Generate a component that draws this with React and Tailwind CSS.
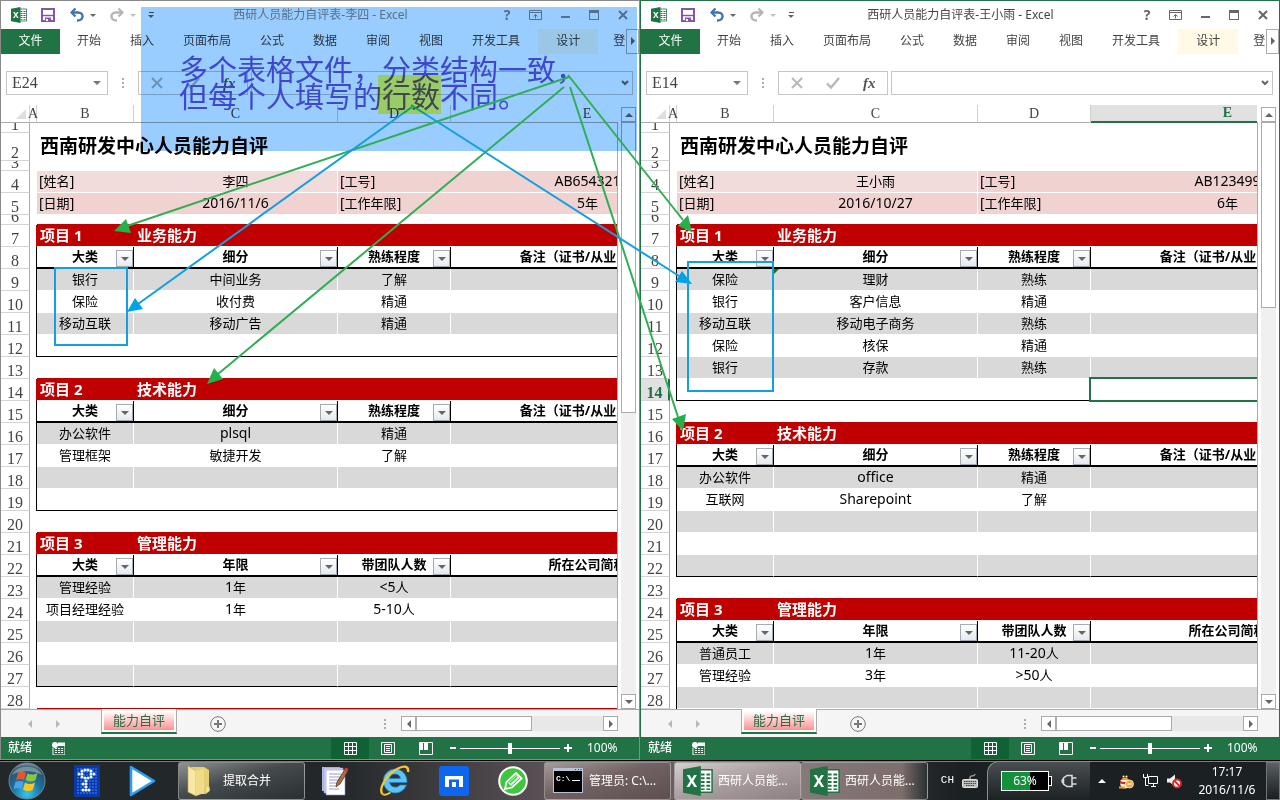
import React from "react";

const SANS = "font-['Noto_Sans','Noto_Sans_CJK_SC',sans-serif]";
const SERIF = "font-['Liberation_Serif','Noto_Sans_CJK_SC',serif]";

/* ---------- sheet data ---------- */

const bar = (no, name) => ({ type: "bar", no, name });
const head = (...cells) => ({ type: "head", cells });
const data = (...cells) => ({ type: "data", cells });
const blank = () => ({ type: "blank" });

const skillHead = () => head("大类", "细分", "熟练程度", "备注（证书/从业资格）");
const manageHead = () => head("大类", "年限", "带团队人数", "所在公司简称");

const intro = (name, id, date, years) => [
  { type: "blank", size: "small" },
  { type: "title", text: "西南研发中心人员能力自评" },
  { type: "blank", size: "small" },
  { type: "info", cells: ["[姓名]", name, "[工号]", id] },
  { type: "info", dark: true, cells: ["[日期]", date, "[工作年限]", years] },
  { type: "blank", size: "small" },
];

const leftRows = [
  ...intro("李四", "AB654321", "2016/11/6", "5年"),
  bar("项目 1", "业务能力"),
  skillHead(),
  data("银行", "中间业务", "了解"),
  data("保险", "收付费", "精通"),
  data("移动互联", "移动广告", "精通"),
  data(),
  blank(),
  bar("项目 2", "技术能力"),
  skillHead(),
  data("办公软件", "plsql", "精通"),
  data("管理框架", "敏捷开发", "了解"),
  data(),
  data(),
  blank(),
  bar("项目 3", "管理能力"),
  manageHead(),
  data("管理经验", "1年", "<5人"),
  data("项目经理经验", "1年", "5-10人"),
  data(),
  data(),
  data(),
  { type: "blank", beforeBar: true },
];

const rightRows = [
  ...intro("王小雨", "AB123499", "2016/10/27", "6年"),
  bar("项目 1", "业务能力"),
  skillHead(),
  { type: "data", flag: true, cells: ["保险", "理财", "熟练"] },
  data("银行", "客户信息", "精通"),
  data("移动互联", "移动电子商务", "熟练"),
  data("保险", "核保", "精通"),
  data("银行", "存款", "熟练"),
  { type: "data", selected: true, cells: [] },
  blank(),
  bar("项目 2", "技术能力"),
  skillHead(),
  data("办公软件", "office", "精通"),
  data("互联网", "Sharepoint", "了解"),
  data(),
  data(),
  data(),
  blank(),
  bar("项目 3", "管理能力"),
  manageHead(),
  data("普通员工", "1年", "11-20人"),
  data("管理经验", "3年", ">50人"),
  { type: "data", cells: [], open: true },
];

/* Latin runs are set one size larger than the Chinese text around them. */
function Mixed({ text }) {
  if (!text) return null;
  return text.split(/([\x21-\x7e]+)/).map((part, i) =>
    i % 2 ? (
      <span key={i} className="text-[14px]">
        {part}
      </span>
    ) : (
      part
    )
  );
}

/* ---------- small icons ---------- */

function ExcelIcon({ className }) {
  return (
    <svg viewBox="0 0 32 32" className={className} aria-hidden="true">
      <rect x="17" y="4" width="14" height="24" fill="#fff" stroke="#217346" strokeWidth="1.6" />
      <g fill="#217346">
        <path d="M19 8h4v2h-4zM25 8h4v2h-4zM19 12h4v2h-4zM25 12h4v2h-4zM19 16h4v2h-4zM25 16h4v2h-4zM19 20h4v2h-4zM25 20h4v2h-4zM19 24h4v1.600h-4zM25 24h4v1.600h-4z" />
      </g>
      <path d="M0 3.500 19 0v32L0 28.500z" fill="#217346" />
      <text x="9.500" y="22" textAnchor="middle" fontSize="17" fontWeight="700" fill="#fff" fontFamily="Noto Sans, sans-serif">
        X
      </text>
    </svg>
  );
}

function SaveIcon() {
  return (
    <svg viewBox="0 0 14 14" className="size-[14px]" fill="none" aria-hidden="true">
      <path d="M1 1h12v12H1z" stroke="#8458a8" strokeWidth="2" />
      <path d="M2 7.500h10" stroke="#8458a8" strokeWidth="1.500" />
      <path d="M4 9.500h6V13H4z" fill="#8458a8" />
      <path d="M5 11h2v2H5z" fill="#fff" />
    </svg>
  );
}

function UndoIcon() {
  return (
    <svg viewBox="0 0 14 14" className="size-[14px]" fill="none" aria-hidden="true">
      <path d="M1.500 4.500H8c6.500 0 6 8-1 8" stroke="#3f74b1" strokeWidth="2.400" />
      <path d="M5.500.5 1.500 4.500l4 4" stroke="#3f74b1" strokeWidth="2.200" />
    </svg>
  );
}

function RedoIcon() {
  return (
    <svg viewBox="0 0 14 14" className="size-[14px]" fill="none" aria-hidden="true">
      <path d="M12.500 4.500H6c-6.500 0-6 8 1 8" stroke="#b5b5b5" strokeWidth="2.400" />
      <path d="m8.500.5 4 4-4 4" stroke="#b5b5b5" strokeWidth="2.200" />
    </svg>
  );
}

function Caret({ className = "text-[#666666]" }) {
  return (
    <svg viewBox="0 0 6 3" className={`h-[3px] w-[6px] ${className}`} fill="currentColor" aria-hidden="true">
      <path d="M0 0h6L3 3z" />
    </svg>
  );
}

const ARROWS = {
  up: "M0 6h8L4 2z",
  down: "M0 2h8L4 6z",
  left: "M6 0v8L2 4z",
  right: "M2 0v8l4-4z",
};

function Arrow({ dir, className = "" }) {
  return (
    <svg viewBox="0 0 8 8" className={`size-2 ${className}`} fill="currentColor" aria-hidden="true">
      <path d={ARROWS[dir]} />
    </svg>
  );
}

/* ---------- Excel window parts ---------- */

function WindowButton({ label, children }) {
  return (
    <button aria-label={label} className="grid size-[14px] place-items-center">
      {children}
    </button>
  );
}

function TitleBar({ title, active }) {
  const tone = active ? "text-[#666666]" : "text-[#8c8c8c]";
  return (
    <header className="flex h-7 items-center">
      <div className="flex flex-1 basis-0 items-center pl-[10px]">
        <ExcelIcon className="size-4" />
        <button aria-label="保存" className="ml-[14px]"><SaveIcon /></button>
        <button aria-label="撤消" className="ml-[15px]"><UndoIcon /></button>
        <button aria-label="撤消选项" className="ml-[6px]"><Caret /></button>
        <button aria-label="恢复" className="ml-[14px]"><RedoIcon /></button>
        <button aria-label="恢复选项" className="ml-[6px]"><Caret className="text-[#c0c0c0]" /></button>
        <button aria-label="自定义快速访问工具栏" className="ml-[12px] flex flex-col items-center gap-[2px]">
          <span className="h-px w-[5px] bg-[#555555]" />
          <Caret />
        </button>
      </div>
      <h1 className={`shrink-0 text-[12px] ${active ? "text-[#444444]" : "text-[#8c8c8c]"}`}>{title}</h1>
      <div className={`flex flex-1 basis-0 items-center justify-end gap-[15px] pr-[9px] ${tone}`}>
        <WindowButton label="帮助">
          <span className="text-[14px] font-bold leading-[14px]">?</span>
        </WindowButton>
        <WindowButton label="功能区显示选项">
          <svg viewBox="0 0 14 12" className="h-3 w-[14px]" fill="none" stroke="currentColor" aria-hidden="true">
            <path d="M.5 1.500h12v9H.5zM.5 3.500h12M6.500 9.500v-4M4.500 7.500l2-2 2 2" />
          </svg>
        </WindowButton>
        <WindowButton label="最小化">
          <span className="mt-1 h-[2px] w-[9px] bg-current" />
        </WindowButton>
        <WindowButton label="最大化">
          <span className="h-[10px] w-[10px] border border-t-[3px] border-current" />
        </WindowButton>
        <WindowButton label="关闭">
          <svg viewBox="0 0 10 10" className="size-[10px]" stroke="currentColor" strokeWidth="2" aria-hidden="true">
            <path d="m1 1 8 8M9 1 1 9" />
          </svg>
        </WindowButton>
      </div>
    </header>
  );
}

const TABS = ["开始", "插入", "页面布局", "公式", "数据", "审阅", "视图", "开发工具"];

function Ribbon() {
  return (
    <nav className="flex h-[25px] items-stretch overflow-hidden text-[12px] leading-[22px] text-[#444444] [&_button]:pb-[2px]">
      <button className="w-[59px] shrink-0 bg-[#217346] text-white">文件</button>
      <div className="ml-[17px] flex shrink-0 gap-[29px]">
        {TABS.map((t) => (
          <button key={t}>{t}</button>
        ))}
      </div>
      <button className="ml-[18px] shrink-0 bg-[#fff9e5] px-[18px]">设计</button>
      <div className="ml-[15px] flex min-w-0 flex-1 overflow-hidden whitespace-nowrap">
        <button>登录</button>
      </div>
      <button aria-label="向右滚动" className="grid w-[13px] shrink-0 place-items-center border border-[#ababab] bg-white">
        <Arrow dir="right" className="text-[#666666]" />
      </button>
    </nav>
  );
}

function FormulaBar({ cell, id }) {
  return (
    <div className="flex h-[51px] items-center pl-[5px] pr-[6px] pt-[7px]">
      <div className="flex h-6 w-[102px] shrink-0 items-center border border-[#c6c6c6] bg-white pl-[5px] pr-[6px]">
        <input
          id={`${id}-name`}
          aria-label="名称框"
          defaultValue={cell}
          className={`w-0 min-w-0 flex-1 text-[16px] leading-5 text-[#444444] outline-none ${SERIF}`}
        />
        <button aria-label="名称列表">
          <svg viewBox="0 0 8 4" className="h-1 w-2" fill="#777777" aria-hidden="true">
            <path d="M0 0h8L4 4z" />
          </svg>
        </button>
      </div>
      <div className="flex w-[30px] shrink-0 flex-col items-center gap-[2px]">
        <i className="size-[2px] bg-[#ababab]" />
        <i className="size-[2px] bg-[#ababab]" />
        <i className="size-[2px] bg-[#ababab]" />
      </div>
      <div className="flex h-6 w-[110px] shrink-0 items-center justify-around border border-[#c6c6c6] bg-white">
        <button aria-label="取消">
          <svg viewBox="0 0 12 12" className="size-3" stroke="#b8b8b8" strokeWidth="2" aria-hidden="true">
            <path d="m1 1 10 10M11 1 1 11" />
          </svg>
        </button>
        <button aria-label="输入">
          <svg viewBox="0 0 14 12" className="h-3 w-[14px]" fill="none" stroke="#b8b8b8" strokeWidth="2.400" aria-hidden="true">
            <path d="m1 6.500 4 4L13 1" />
          </svg>
        </button>
        <button aria-label="插入函数" className="font-['Liberation_Serif',serif] text-[15px] font-bold italic leading-4 text-[#555555]">
          fx
        </button>
      </div>
      <div className="ml-[3px] flex h-6 min-w-0 flex-1 items-center border border-[#c6c6c6] bg-white pr-[3px]">
        <input aria-label="编辑栏" className="min-w-0 flex-1 px-1 text-[13px] outline-none" />
        <button aria-label="展开编辑栏">
          <svg viewBox="0 0 8 6" className="h-[6px] w-2" fill="none" stroke="#666666" strokeWidth="2" aria-hidden="true">
            <path d="m1 1 3 3 3-3" />
          </svg>
        </button>
      </div>
    </div>
  );
}

function FilterButton({ label }) {
  return (
    <button
      aria-label={`筛选 ${label}`}
      className="absolute bottom-0 right-0 grid size-[17px] place-items-center border border-[#a5abb3] bg-linear-to-b from-white to-[#e6e9ee]"
    >
      <svg viewBox="0 0 8 4" className="h-1 w-2" fill="#666666" aria-hidden="true">
        <path d="M0 0h8L4 4z" />
      </svg>
    </button>
  );
}

function RowCells({ row, shaded, last, beforeBar }) {
  if (row.type === "title") {
    return (
      <>
        <td />
        <td colSpan={4} className="pl-[3px] text-[19px] font-bold leading-[26px]">{row.text}</td>
      </>
    );
  }
  if (row.type === "info") {
    const [a, b, c, d] = row.cells;
    const first = row.dark ? "bg-[#f0d2d1]" : "bg-[#f2dcdb]";
    return (
      <>
        <td />
        <td className={`border-b border-white pl-[2px] ${first}`}><Mixed text={a} /></td>
        <td className={`border-b border-r border-white text-center ${first}`}><Mixed text={b} /></td>
        <td className="border-b border-white bg-[#f0d2d1] pl-[2px]"><Mixed text={c} /></td>
        <td className="border-b border-white bg-[#f0d2d1] text-center"><Mixed text={d} /></td>
      </>
    );
  }
  if (row.type === "bar") {
    return (
      <>
        <td className="border-r border-r-[#c00000]" />
        <td className="border-b border-white bg-[#c00000] pl-[3px] text-[15px] font-bold text-white">{row.no}</td>
        <td colSpan={3} className="border-b border-white bg-[#c00000] pl-[3px] text-[15px] font-bold text-white">{row.name}</td>
      </>
    );
  }
  if (row.type === "head") {
    return (
      <>
        <td className="border-r border-black" />
        {row.cells.map((c, i) => (
          <th key={c} scope="col" className={`relative border-b-2 border-black text-center font-bold ${i < 3 ? "border-r" : ""}`}>
            {c}
            {i < 3 && <FilterButton label={c} />}
          </th>
        ))}
      </>
    );
  }
  if (row.type === "data") {
    const fill = shaded ? "bg-[#d9d9d9]" : "bg-white";
    const edge = last ? "border-b-black" : "border-b-white";
    const divided = shaded || !last;
    return (
      <>
        <td className="border-r border-black" />
        {[0, 1, 2, 3].map((i) => (
          <td
            key={i}
            className={`relative border-b text-center ${fill} ${edge} ${i < 3 && divided ? "border-r border-r-white" : ""}`}
          >
            <Mixed text={row.cells[i]} />
            {row.flag && i === 1 && (
              <svg viewBox="0 0 5 5" className="absolute left-0 top-0 size-[5px]" fill="#0a7d0a" aria-hidden="true">
                <path d="M0 0h5L0 5z" />
              </svg>
            )}
            {row.selected && i === 3 && (
              <span className="absolute -bottom-[2px] -left-[2px] -right-[2px] -top-[2px] border-2 border-[#217346]" />
            )}
          </td>
        ))}
      </>
    );
  }
  return (
    <>
      <td />
      <td colSpan={4} className={beforeBar ? "border-b border-b-[#c00000]" : ""} />
    </>
  );
}

function Sheet({ rows, selectedRow, selectedCol }) {
  let offset = 0;
  return (
    <div className="min-w-0 flex-1 overflow-hidden">
      <table className="w-[723px] table-fixed border-separate border-spacing-0 text-[13px] text-black">
        <colgroup>
          <col className="w-[29px]" />
          <col className="w-[7px]" />
          <col className="w-[97px]" />
          <col className="w-[204px]" />
          <col className="w-[113px]" />
          <col className="w-[273px]" />
        </colgroup>
        <thead>
          <tr className={`h-[18px] text-[14px] leading-[16px] text-[#444444] ${SERIF}`}>
            <td className="border-b border-r border-b-[#ababab] border-r-[#d0d0d0] p-0">
              <svg viewBox="0 0 10 10" className="ml-auto mr-[3px] size-[10px]" fill="#dfdfdf" aria-hidden="true">
                <path d="M10 0v10H0z" />
              </svg>
            </td>
            {["A", "B", "C", "D", "E"].map((c) => (
              <th
                key={c}
                scope="col"
                className={
                  c === selectedCol
                    ? "border-b-2 border-b-[#217346] bg-[#e1e1e1] p-0 font-bold text-[#217346]"
                    : "border-b border-r border-b-[#ababab] border-r-[#d0d0d0] p-0 font-normal"
                }
              >
                <span className="flex justify-center">{c}</span>
              </th>
            ))}
          </tr>
        </thead>
        <tbody className="leading-[16px] [&_td]:whitespace-nowrap [&_td]:pb-[2px] [&_th]:whitespace-nowrap [&_th[scope=col]]:pb-[2px]">
          {rows.map((row, i) => {
            offset = row.type === "data" ? offset + 1 : 0;
            const next = rows[i + 1];
            const small = row.size === "small";
            const chosen = i + 1 === selectedRow;
            const size = small ? "h-[10px]" : row.type === "title" ? "h-[28px]" : "h-[22px]";
            const inner = small ? "h-[9px]" : row.type === "title" ? "h-[27px]" : "h-[21px]";
            return (
              <tr key={i} className={size}>
                <th
                  scope="row"
                  className={`border-b border-b-[#d4d4d4] ${
                    chosen
                      ? "border-r-2 border-r-[#217346] bg-[#e1e1e1] font-bold text-[#217346]"
                      : "border-r border-r-[#ababab] font-normal text-[#444444]"
                  }`}
                >
                  <span className={`flex items-end justify-center overflow-hidden text-[16px] leading-[14px] ${SERIF} ${inner}`}>
                    {i + 1}
                  </span>
                </th>
                <RowCells
                  row={row}
                  shaded={offset % 2 === 1}
                  last={!row.open && (!next || next.type !== "data")}
                  beforeBar={row.beforeBar || next?.type === "bar"}
                />
              </tr>
            );
          })}
        </tbody>
      </table>
    </div>
  );
}

function VerticalScroll({ thumb }) {
  return (
    <div className="flex w-[22px] shrink-0">
      <div className="mt-[17px] w-px bg-[#ababab]" />
      <div className="ml-[3px] mt-[2px] flex w-[15px] flex-col bg-[#f0f0f0] text-[#666666]">
        <button aria-label="向上滚动" className="grid h-[15px] place-items-center border border-[#ababab] bg-white">
          <Arrow dir="up" />
        </button>
        <div className={`border border-[#ababab] bg-white ${thumb}`} />
        <div className="flex-1" />
        <button aria-label="向下滚动" className="grid h-[15px] place-items-center border border-[#ababab] bg-white">
          <Arrow dir="down" />
        </button>
      </div>
    </div>
  );
}

function SheetTabs() {
  return (
    <div className="flex h-7 border-t border-[#ababab] bg-[#f5f5f5]">
      <div className="flex w-[100px] shrink-0 items-center gap-[20px] pl-[25px] text-[#b8b8b8]">
        <button aria-label="上一个工作表" className="grid"><Arrow dir="left" /></button>
        <button aria-label="下一个工作表" className="grid"><Arrow dir="right" /></button>
      </div>
      <button className="-mt-px h-[25px] w-[76px] shrink-0 border-x border-b-2 border-x-[#ababab] border-b-[#217346] bg-white p-[2px] text-[13px] text-[#217346]">
        <span className="block h-full bg-linear-to-b from-white to-[#ff9090] leading-[19px]">能力自评</span>
      </button>
      <button aria-label="新工作表" className="ml-[33px] grid place-items-center">
        <svg viewBox="0 0 16 16" className="size-4" fill="none" stroke="#777777" aria-hidden="true">
          <circle cx="8" cy="8" r="7.300" />
          <path d="M4 8h8M8 4v8" strokeWidth="2" />
        </svg>
      </button>
      <div className="flex-1" />
      <div className="flex w-[2px] flex-col justify-center gap-[2px]">
        <i className="size-[2px] bg-[#ababab]" />
        <i className="size-[2px] bg-[#ababab]" />
        <i className="size-[2px] bg-[#ababab]" />
      </div>
      <div className="ml-[15px] mr-[21px] flex h-[15px] w-[217px] self-center bg-[#e8e8e8] text-[#666666]">
        <button aria-label="向左滚动" className="grid w-[15px] place-items-center border border-[#ababab] bg-white"><Arrow dir="left" /></button>
        <div className="w-[116px] border border-[#ababab] bg-white" />
        <div className="flex-1" />
        <button aria-label="向右滚动" className="grid w-[15px] place-items-center border border-[#ababab] bg-white"><Arrow dir="right" /></button>
      </div>
    </div>
  );
}

function StatusBar() {
  return (
    <footer className="flex h-[22px] items-center bg-[#217346] text-[12px] text-white">
      <span className="pl-[7px] font-medium">就绪</span>
      <svg viewBox="0 0 13 13" className="ml-5 size-[13px]" aria-hidden="true">
        <path d="M6 1h7v12H1V6" fill="none" stroke="#fff" />
        <path d="M6 1h7v3H6z" fill="#fff" />
        <circle cx="3" cy="3" r="3" fill="#fff" />
        <path d="M3 6.500h2M6 6.500h2M9 6.500h2M3 8.500h2M6 8.500h2M9 8.500h2M3 10.500h2M6 10.500h2M9 10.500h2" stroke="#fff" />
      </svg>
      <div className="flex-1" />
      <div className="flex items-center pr-5">
        <button aria-label="普通" className="grid h-[21px] w-[38px] place-items-center bg-[#0e6233]">
          <svg viewBox="0 0 13 13" className="size-[13px]" fill="none" stroke="#fff" aria-hidden="true">
            <path d="M.5.5h12v12H.5zM4.500.5v12M8.500.5v12M.5 4.500h12M.5 8.500h12" />
          </svg>
        </button>
        <button aria-label="页面布局" className="grid h-[21px] w-[38px] place-items-center">
          <svg viewBox="0 0 14 13" className="h-[13px] w-[14px]" fill="none" stroke="#fff" aria-hidden="true">
            <path d="M.5.5h13v12H.5zM3.500 2.500h7v8h-7zM5 4.500h4M5 6.500h4M5 8.500h4" />
          </svg>
        </button>
        <button aria-label="分页预览" className="grid h-[21px] w-[38px] place-items-center">
          <svg viewBox="0 0 14 13" className="h-[13px] w-[14px]" fill="none" stroke="#fff" aria-hidden="true">
            <path d="M.5.5h13v12H.5z" />
            <path d="M1 1h3v7H1zM5 1h4v7H5z" fill="#fff" stroke="none" />
          </svg>
        </button>
        <button aria-label="缩小" className="grid h-4 w-[15px] place-items-center"><span className="h-[2px] w-[6px] bg-white" /></button>
        <input
          type="range"
          aria-label="显示比例"
          defaultValue={50}
          className="h-4 w-[100px] appearance-none bg-transparent [&::-webkit-slider-runnable-track]:h-px [&::-webkit-slider-runnable-track]:bg-white [&::-webkit-slider-thumb]:-mt-[5px] [&::-webkit-slider-thumb]:h-[11px] [&::-webkit-slider-thumb]:w-1 [&::-webkit-slider-thumb]:appearance-none [&::-webkit-slider-thumb]:bg-white"
        />
        <button aria-label="放大" className="grid h-4 w-4 place-items-center">
          <svg viewBox="0 0 8 8" className="size-2" stroke="#fff" strokeWidth="2" aria-hidden="true"><path d="M0 4h8M4 0v8" /></svg>
        </button>
        <span className="ml-[11px] w-8">100%</span>
      </div>
    </footer>
  );
}

function ExcelWindow({ id, title, cell, rows, active, selectedRow, selectedCol, thumb }) {
  return (
    <section
      className={`flex min-w-0 flex-1 flex-col border bg-white ${
        active ? "border-[#217346]" : "border-[#8a8a8a]"
      }`}
    >
      <TitleBar title={title} active={active} />
      <Ribbon />
      <FormulaBar cell={cell} id={id} />
      <div className="flex">
        <Sheet rows={rows} selectedRow={selectedRow} selectedCol={selectedCol} />
        <VerticalScroll thumb={thumb} />
      </div>
      <SheetTabs />
      <StatusBar />
    </section>
  );
}

/* ---------- taskbar ---------- */

function StartOrb() {
  return (
    <svg viewBox="0 0 38 38" className="size-[38px]" aria-hidden="true">
      <defs>
        <radialGradient id="orb" cx="0.5" cy="0.85" r="0.9">
          <stop offset="0" stopColor="#35c8f0" />
          <stop offset="0.45" stopColor="#1c6f9e" />
          <stop offset="0.8" stopColor="#2d5069" />
          <stop offset="1" stopColor="#a9bcc8" />
        </radialGradient>
      </defs>
      <circle cx="19" cy="19" r="18" fill="url(#orb)" stroke="#6c8592" />
      <path d="M10 11c3-2 6-1.500 8 0l-2 7c-2.500-1.500-5-1.500-8 0z" fill="#e8572a" />
      <path d="M19.500 11.500c3 1.500 6 1.500 10-.500l-2 7c-3 2-6.500 2-10 0z" fill="#8cc63f" />
      <path d="M7.500 20c3-1.500 5.500-1.500 8 0l-2 7c-2.500-1.500-5-1.500-8 0z" fill="#4aa3e8" />
      <path d="M17 20.500c3.500 2 6.500 2 10 0l-2 7c-3 2-6.500 2-10 0z" fill="#fcc61f" />
      <path d="M4 13C8 2 30 2 34 13c-8-5-22-5-30 0z" fill="#fff" opacity="0.35" />
    </svg>
  );
}

function DottedIcon() {
  const dots = [
    [8, 6], [11, 5], [14, 5], [17, 6],
    [5, 9], [8, 9], [17, 9], [20, 9],
    [8, 12], [11, 13], [14, 13], [17, 12],
    [12, 16], [12, 19], [9, 19], [12, 22], [9, 25], [12, 25], [15, 25],
  ];
  return (
    <svg viewBox="0 0 26 32" className="h-8 w-[26px]" aria-hidden="true">
      <defs>
        <pattern id="dots" width="3" height="3" patternUnits="userSpaceOnUse">
          <rect width="2" height="2" fill="#2460d8" />
        </pattern>
      </defs>
      <rect width="26" height="32" fill="#0b3aa8" />
      <rect x="3" y="3" width="20" height="26" fill="url(#dots)" />
      {dots.map(([x, y]) => (
        <circle key={`${x}-${y}`} cx={x} cy={y} r="1.500" fill="#eaf6ff" />
      ))}
    </svg>
  );
}

function FolderIcon() {
  return (
    <svg viewBox="0 0 24 32" className="h-8 w-6" aria-hidden="true">
      <path d="M4 2h13l5 3v20l-4 4H6z" fill="#e8cf73" />
      <path d="M1 1l8 5v25l-8-4z" fill="#f7e9a5" stroke="#c9a94a" strokeWidth="0.600" />
      <path d="M9 6l8-2v24l-8 3z" fill="#f0db87" />
      <path d="M19 21c3-1 4 1 3.500 5l-4 3z" fill="#f5e79a" stroke="#cbb050" strokeWidth="0.600" />
    </svg>
  );
}

function NotesIcon() {
  return (
    <svg viewBox="0 0 28 30" className="h-[30px] w-7" aria-hidden="true">
      <path d="M1 1h18v24H1z" fill="#b9b9ea" />
      <path d="M3 2h19v25H3z" fill="#dcdcf6" stroke="#8e8ed0" strokeWidth="0.600" />
      <path d="M5 4h19v25H5z" fill="#fff" stroke="#8e8ed0" strokeWidth="0.600" />
      <path d="M8 8h12M8 11h12M8 14h10M8 17h9M8 20h7M8 23h10" stroke="#9a9ac8" />
      <path d="m15 21 1-5 8-13 3 2-8 13z" fill="#a8703a" stroke="#4a2d14" strokeWidth="0.700" />
      <path d="m23 4 1.500-2.500L27.500 3 26 6z" fill="#e0342b" />
    </svg>
  );
}

function BrowserIcon() {
  return (
    <svg viewBox="0 0 32 32" className="size-8" aria-hidden="true">
      <path
        d="M16 4a12 12 0 1 0 11.500 16h-6.500a6 6 0 0 1-10.500-2.500H28C28.500 10 23 4 16 4zm-5.500 9.500a5.600 5.600 0 0 1 11 0z"
        fill="#5cc4f4"
        stroke="#1f7fc4"
        strokeWidth="0.700"
      />
      <path d="M3.500 29C-1 24 8 9 18 4c7-4 12-3 11 3" fill="none" stroke="#f5c431" strokeWidth="2.400" />
      <path d="M3.500 29c2 1.500 5 .5 8-1.500" fill="none" stroke="#f5c431" strokeWidth="2" />
    </svg>
  );
}

function MaxIcon() {
  return (
    <svg viewBox="0 0 30 30" className="size-[30px]" aria-hidden="true">
      <rect width="30" height="30" rx="3" fill="#0d66ee" />
      <path d="M6 21V10h18v11h-4v-7.500h-10V21zM13 16h4v5h-4z" fill="#fff" />
    </svg>
  );
}

function PencilIcon() {
  return (
    <svg viewBox="0 0 30 30" className="size-[30px]" aria-hidden="true">
      <circle cx="15" cy="15" r="13.800" fill="#3fc63f" stroke="#fff" strokeWidth="2" />
      <path d="m7 23 1.500-7L18 7l5.500 5.500L14 21.500z" fill="none" stroke="#fff" strokeWidth="1.800" />
      <path d="m10 17 8.500-8 3 3-8.500 8z" fill="#d8f5d8" />
      <path d="m12 17 7-6.500" stroke="#3fbf3f" strokeWidth="1.200" />
    </svg>
  );
}

function ConsoleIcon() {
  return (
    <svg viewBox="0 0 30 25" className="h-[25px] w-[30px]" aria-hidden="true">
      <rect width="30" height="25" fill="#b8c4d4" />
      <rect x="1" y="3" width="28" height="21" fill="#000" />
      <path d="M22 1.500h1M25 1.500h1M27.500 1.500h1" stroke="#23406e" />
      <text x="3" y="13" fontSize="8" fontWeight="700" fill="#fff" fontFamily="Liberation Mono, monospace">C:\</text>
      <path d="M19 12.500h8" stroke="#fff" />
    </svg>
  );
}

function TaskButton({ icon, children, tone }) {
  return (
    <button
      className={`flex h-[38px] w-[127px] shrink-0 items-center overflow-hidden whitespace-nowrap rounded-[3px] border border-[#a9a6a6]/70 text-[12px] text-white ${tone}`}
    >
      {icon}
      {children}
    </button>
  );
}

function Tray() {
  return (
    <div className="flex h-full items-center text-white">
      <span className="font-['Liberation_Mono',monospace] text-[11px]">CH</span>
      <svg viewBox="0 0 16 15" className="ml-2 h-[15px] w-4" fill="none" stroke="#e0e0e0" aria-hidden="true">
        <path d="M8 6V4c0-2 5 0 5-3" />
        <rect x="0.500" y="6.500" width="15" height="8" rx="1" fill="#bdbdbd" />
        <path d="M2 8.500h12M2 10.500h12M4 12.500h8" stroke="#444" strokeDasharray="1.500 0.700" />
      </svg>
      <div className="ml-[9px] flex h-[39px] w-[103px] items-center self-end rounded-tl-[12px] border-l border-t border-[#8a8f91] bg-linear-to-b from-[#4a5052] to-[#1c2123] pl-[13px]">
        <div className="relative grid h-5 w-12 place-items-center border border-white bg-linear-to-r from-[#12903a] from-60% to-black to-60% text-[12px] leading-none">
          63%
          <span className="absolute -right-[4px] top-1 h-[10px] w-[3px] border border-l-0 border-white bg-black" />
        </div>
        <svg viewBox="0 0 16 14" className="ml-3 h-[14px] w-4" fill="none" stroke="#dcdcdc" strokeWidth="1.500" aria-hidden="true">
          <path d="M11 1.500H6L2.500 4v6L6 12.500h5zM11 4h4.500M11 10h4.500M2.500 4.500C.5 6 .5 8 2.500 9.500" />
        </svg>
      </div>
      <button aria-label="显示隐藏的图标" className="ml-2"><Arrow dir="up" /></button>
      <svg viewBox="0 0 16 16" className="ml-3 size-4" aria-hidden="true">
        <ellipse cx="7" cy="10" rx="5" ry="5.500" fill="#f0f0f0" />
        <path d="M2.500 6.500C2.500-1.500 11.500-1.500 11.500 6.500z" fill="#2a1a10" />
        <circle cx="5.500" cy="3.500" r="1" fill="#fff" />
        <circle cx="8.500" cy="3.500" r="1" fill="#fff" />
        <path d="M2 7.500c3 2 7 2 10 0v3c-3 1-7 1-10 0z" fill="#d9291c" />
        <ellipse cx="7" cy="5.800" rx="3" ry="1.200" fill="#f6a21c" />
        <path d="M1 14.500h6" stroke="#f6a21c" strokeWidth="2" />
        <circle cx="11.500" cy="11" r="4" fill="#f3a43a" stroke="#fff0c8" strokeWidth="0.800" />
        <path d="M9.500 11h4" stroke="#fff" strokeWidth="1.500" />
      </svg>
      <svg viewBox="0 0 15 15" className="ml-[9px] size-[15px]" fill="none" stroke="#fff" aria-hidden="true">
        <path d="M5.500 3.500h9v7h-9zM8 13.500h5M10.500 11v2" />
        <path d="M.5 1v3.500h4V1M2.500 4.500v8h3" />
      </svg>
      <svg viewBox="0 0 16 16" className="ml-[8px] size-4" aria-hidden="true">
        <path d="M1 5.500h3l5-4v12l-5-4H1z" fill="#f0f0f0" />
        <circle cx="11" cy="10.500" r="4" fill="#fff" stroke="#d92626" strokeWidth="1.800" />
        <path d="m8.500 8 5 5" stroke="#d92626" strokeWidth="1.800" />
      </svg>
      <div className="ml-[14px] w-[62px] text-center text-[12px] leading-[18px]">
        <div>17:17</div>
        <div>2016/11/6</div>
      </div>
      <button aria-label="显示桌面" className="ml-2 h-[38px] w-[14px] border border-[#70767a] bg-linear-to-b from-[#5a6063] to-[#1a1e20]" />
    </div>
  );
}

function Taskbar() {
  const excel = <ExcelIcon className="ml-2 mr-[5px] size-[30px] shrink-0" />;
  return (
    <footer className="flex h-10 items-center overflow-hidden border-t border-black bg-linear-to-r from-[#22272a] from-26% via-[#75656a] via-50% to-[#1b2023] to-75% text-white shadow-[inset_0_1px_0_#7d8082]">
      <button aria-label="开始" className="ml-2"><StartOrb /></button>
      <button aria-label="点阵工具" className="ml-7"><DottedIcon /></button>
      <button aria-label="播放器" className="ml-[29px]">
        <svg viewBox="0 0 28 32" className="h-8 w-7" aria-hidden="true">
          <path d="M2 2v28l23-14z" fill="#fff" stroke="#2f9bf5" strokeWidth="2.600" strokeLinejoin="round" />
        </svg>
      </button>
      <div className="ml-[21px]">
        <TaskButton icon={<span className="ml-2 mr-3"><FolderIcon /></span>} tone="bg-linear-to-br from-[#8f9394] via-[#454b4d] via-45% to-[#2a2f31]">
          提取合并
        </TaskButton>
      </div>
      <button aria-label="记事本" className="ml-4"><NotesIcon /></button>
      <button aria-label="浏览器" className="ml-[30px]"><BrowserIcon /></button>
      <button aria-label="傲游" className="ml-7"><MaxIcon /></button>
      <button aria-label="笔记" className="ml-[29px]"><PencilIcon /></button>
      <div className="ml-4 flex items-center gap-[3px]">
        <TaskButton icon={<span className="ml-2 mr-[6px] shrink-0"><ConsoleIcon /></span>} tone="bg-linear-to-br from-[#a79b9b] via-[#716163] via-45% to-[#5d4f50]">
          管理员: C:\...
        </TaskButton>
        <div className="flex">
          <TaskButton icon={excel} tone="bg-linear-to-br from-[#d5cfcf] via-[#a89c9e] via-50% to-[#8c8082]">
            西研人员能...
          </TaskButton>
          <TaskButton icon={excel} tone="bg-linear-to-r from-[#85797a] via-[#7d6d6b] via-80% to-[#2c3133]">
            西研人员能...
          </TaskButton>
        </div>
      </div>
      <div className="flex-1" />
      <Tray />
    </footer>
  );
}

/* ---------- annotation laid over both windows ---------- */

function Annotation() {
  return (
    <div className="pointer-events-none absolute left-0 top-0 h-[800px] w-[1280px]">
      <p className="absolute left-[179px] top-[56px] whitespace-nowrap text-[29px] leading-[27px] text-[#3f48cc]">
        多个表格文件，分类结构一致，
        <br />
        但每个人填写的行数不同。
      </p>
      <svg viewBox="0 0 1280 800" className="absolute left-0 top-0 h-[800px] w-[1280px]" fill="none" strokeWidth="2" aria-hidden="true">
        <g stroke="#2fae54">
          <path d="M569 77 127 226M564 87 218 374M570 87l108 330M568 75l115 145" />
        </g>
        <g fill="#22b14c">
          <path d="m114 231 12-12 5 14zM207 384l7-16 9 11zM683 431l-11-12 14-5zM692 232l-14-6 10-11z" />
        </g>
        <g stroke="#149fe0">
          <path d="M412 107 138 304M411 105l268 171" />
          <path d="M55 268h72v77H55zM688 262h85v129h-85z" />
        </g>
        <g fill="#00a2e8">
          <path d="m127 312 8-14 8 11zM692 284l-17-2 7-11z" />
        </g>
      </svg>
    </div>
  );
}

export default function App() {
  return (
    <div className={`relative isolate flex min-h-screen flex-col overflow-hidden bg-white ${SANS}`}>
      <main className="flex flex-1">
        <ExcelWindow
          id="left"
          title="西研人员能力自评表-李四 - Excel"
          cell="E24"
          rows={leftRows}
          thumb="h-[291px]"
        />
        <ExcelWindow
          id="right"
          title="西研人员能力自评表-王小雨 - Excel"
          cell="E14"
          rows={rightRows}
          active
          selectedRow={14}
          selectedCol="E"
          thumb="h-[186px]"
        />
      </main>
      <Taskbar />
      <div className="pointer-events-none absolute left-[141px] top-[7px] h-[144px] w-[496px] bg-[#99ccff] mix-blend-multiply" />
      <Annotation />
      <div className="pointer-events-none absolute left-[378px] top-[75px] h-[39px] w-[63px] bg-[#ffff66] mix-blend-multiply" />
    </div>
  );
}
